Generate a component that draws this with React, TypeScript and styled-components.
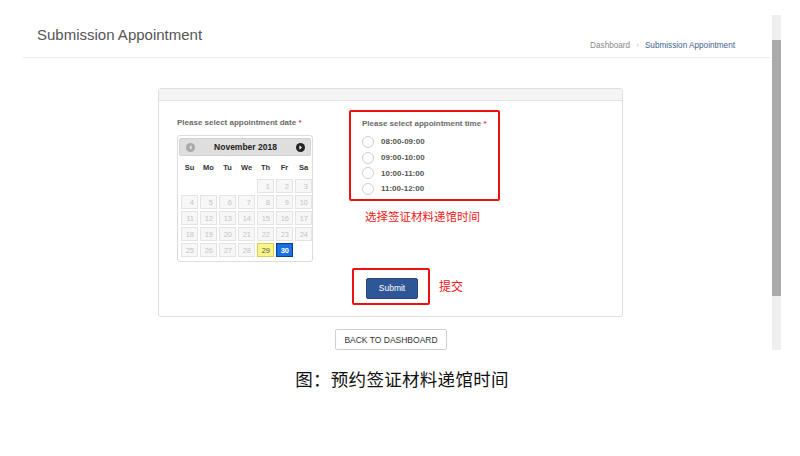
import React from "react";
import styled, { createGlobalStyle } from "styled-components";

const Global = createGlobalStyle`
  html, body { margin: 0; padding: 0; background: #fff; }
  body { width: 800px; height: 456px; overflow: hidden; font-family: "Liberation Sans", Arial, sans-serif; }
`;

const Page = styled.div`
  width: 800px;
  height: 456px;
  display: flex;
  flex-direction: column;
`;

const Shot = styled.div`
  display: flex;
  height: 350px;
`;

const Main = styled.div`
  width: 772px;
  display: flex;
  flex-direction: column;
`;

const ScrollTrack = styled.div`
  margin-top: 15px;
  width: 9px;
  height: 335px;
  background: #efefef;
  display: flex;
  flex-direction: column;
`;

const ScrollThumb = styled.div`
  margin-top: 25px;
  height: 256px;
  background: #ababab;
`;

const Header = styled.div`
  margin-left: 23px;
  width: 747px;
  height: 58px;
  box-sizing: border-box;
  border-bottom: 1px solid #ececec;
  display: flex;
  justify-content: space-between;
  padding: 26px 35px 0 14px;
`;

const Title = styled.h1`
  margin: 0;
  font-size: 15px;
  line-height: 18px;
  font-weight: normal;
  color: #555;
`;

const Crumbs = styled.div`
  margin-top: 14px;
  font-size: 8.2px;
  line-height: 11px;
  color: #888;
  display: flex;
  gap: 6px;
`;

const CrumbSep = styled.span`
  color: #c4c4c4;
`;

const CrumbActive = styled.span`
  color: #40638e;
`;

const Panel = styled.div`
  margin: 30px 0 0 158px;
  width: 465px;
  box-sizing: border-box;
  border: 1px solid #dedede;
  border-radius: 3px;
`;

const PanelHead = styled.div`
  height: 11px;
  background: #f4f4f4;
  border-bottom: 1px solid #e2e2e2;
`;

const PanelBody = styled.div`
  padding: 9px 18px 11px 18px;
  display: flex;
  flex-direction: column;
`;

const Columns = styled.div`
  display: flex;
  gap: 36px;
  align-items: flex-start;
`;

const DateCol = styled.div`
  width: 136px;
  padding-top: 8px;
`;

const Label = styled.div`
  font-size: 8px;
  line-height: 10px;
  font-weight: bold;
  color: #6a6a6a;
  white-space: nowrap;
`;

const Star = styled.span`
  color: #e04040;
`;

const Calendar = styled.div`
  margin-top: 7px;
  border: 1px solid #dcdcdc;
  border-radius: 3px;
  padding: 2px 1px 3px 1px;
  box-sizing: border-box;
  width: 136px;
`;

const CalHead = styled.div`
  height: 18px;
  background: #dedede;
  border: 1px solid #d2d2d2;
  border-radius: 2px;
  box-sizing: border-box;
  display: flex;
  align-items: center;
  justify-content: space-between;
  padding: 0 5px 0 6px;
`;

const Month = styled.span`
  font-size: 8.5px;
  font-weight: bold;
  color: #222;
`;

const DayGrid = styled.div`
  display: grid;
  grid-template-columns: repeat(7, 19px);
  grid-template-rows: 22px;
  grid-auto-rows: 16px;
  padding-left: 1px;
`;

const DayName = styled.div`
  display: flex;
  align-items: center;
  justify-content: center;
  font-size: 7.5px;
  font-weight: bold;
  color: #333;
`;

const Cell = styled.div<{ $kind?: "normal" | "today" | "active" | "empty" }>`
  margin: 1px;
  box-sizing: border-box;
  display: flex;
  align-items: center;
  justify-content: flex-end;
  padding-right: 3px;
  font-size: 7.5px;
  ${({ $kind }) =>
    $kind === "empty"
      ? "border: none; background: transparent;"
      : $kind === "today"
      ? "border: 1px solid #d8ce56; background: #fbf487; color: #555;"
      : $kind === "active"
      ? "border: 1px solid #0c3e8e; background: #1b6fe0; color: #fff; font-weight: bold;"
      : "border: 1px solid #e4e4e4; background: #f7f7f7; color: #c4c4c4;"}
`;

const TimeCol = styled.div`
  display: flex;
  flex-direction: column;
`;

const RedBox = styled.div`
  width: 151px;
  height: 91px;
  box-sizing: border-box;
  border: 2px solid #f01010;
  border-radius: 2px;
  padding: 7px 11px 0 11px;
`;

const Options = styled.div`
  margin-top: 5px;
  display: flex;
  flex-direction: column;
`;

const Option = styled.label`
  height: 15.7px;
  display: flex;
  align-items: center;
  gap: 7px;
  font-size: 8px;
  font-weight: bold;
  color: #555;
`;

const Radio = styled.span`
  width: 10px;
  height: 10px;
  border-radius: 50%;
  border: 1px solid #cfcfcf;
  background: #fff;
`;

const Note = styled.div`
  margin-top: 8px;
  padding-left: 16px;
  font-family: "Noto Sans CJK SC", sans-serif;
  font-size: 11.5px;
  line-height: 14px;
  color: #f01818;
`;

const SubmitRow = styled.div`
  margin-top: 6px;
  display: flex;
  justify-content: center;
`;

const SubmitWrap = styled.div`
  position: relative;
  margin-left: 1px;
`;

const SubmitBox = styled.div`
  width: 78px;
  height: 37px;
  box-sizing: border-box;
  border: 2px solid #f01010;
  border-radius: 2px;
  padding: 7px 0 0 12px;
`;

const SubmitButton = styled.button`
  width: 52px;
  height: 21px;
  border: 1px solid #28497a;
  border-radius: 2px;
  background: #2f5797;
  color: #fff;
  font-family: "Liberation Sans", Arial, sans-serif;
  font-size: 8.5px;
  padding: 0;
`;

const SubmitNote = styled.span`
  position: absolute;
  left: 87px;
  top: 11px;
  font-family: "Noto Sans CJK SC", sans-serif;
  font-size: 12px;
  line-height: 14px;
  color: #f01818;
  white-space: nowrap;
`;

const BackRow = styled.div`
  margin-top: 12px;
  display: flex;
  padding-left: 335px;
`;

const BackButton = styled.button`
  width: 112px;
  height: 21px;
  background: #fff;
  border: 1px solid #cfcfcf;
  border-radius: 2px;
  font-family: "Liberation Sans", Arial, sans-serif;
  font-size: 8.5px;
  color: #333;
  padding: 0;
`;

const Caption = styled.div`
  margin-top: 18px;
  text-align: center;
  padding-left: 4px;
  font-family: "Noto Sans CJK SC", sans-serif;
  font-size: 17.5px;
  line-height: 22px;
  color: #111;
  letter-spacing: 0.3px;
`;

const NavIcon = ({ dir, dark }: { dir: "l" | "r"; dark?: boolean }) => (
  <svg width="9" height="9" viewBox="0 0 10 10">
    <circle cx="5" cy="5" r="5" fill={dark ? "#222" : "#a9a9a9"} />
    {dir === "l" ? (
      <path d="M6.2 2.6 L3.4 5 L6.2 7.4 Z" fill="#e8e8e8" />
    ) : (
      <path d="M3.8 2.6 L6.6 5 L3.8 7.4 Z" fill="#fff" />
    )}
  </svg>
);

const dayNames = ["Su", "Mo", "Tu", "We", "Th", "Fr", "Sa"];
const days: (number | null)[] = [
  null, null, null, null, 1, 2, 3,
  4, 5, 6, 7, 8, 9, 10,
  11, 12, 13, 14, 15, 16, 17,
  18, 19, 20, 21, 22, 23, 24,
  25, 26, 27, 28, 29, 30, null,
];
const times = ["08:00-09:00", "09:00-10:00", "10:00-11:00", "11:00-12:00"];

export default function App() {
  return (
    <Page>
      <Global />
      <Shot>
        <Main>
          <Header>
            <Title>Submission Appointment</Title>
            <Crumbs>
              <span>Dashboard</span>
              <CrumbSep>›</CrumbSep>
              <CrumbActive>Submission Appointment</CrumbActive>
            </Crumbs>
          </Header>
          <Panel>
            <PanelHead />
            <PanelBody>
              <Columns>
                <DateCol>
                  <Label>
                    Please select appointment date <Star>*</Star>
                  </Label>
                  <Calendar>
                    <CalHead>
                      <NavIcon dir="l" />
                      <Month>November 2018</Month>
                      <NavIcon dir="r" dark />
                    </CalHead>
                    <DayGrid>
                      {dayNames.map((d) => (
                        <DayName key={d}>{d}</DayName>
                      ))}
                      {days.map((d, i) => (
                        <Cell
                          key={i}
                          $kind={d === null ? "empty" : d === 29 ? "today" : d === 30 ? "active" : "normal"}
                        >
                          {d}
                        </Cell>
                      ))}
                    </DayGrid>
                  </Calendar>
                </DateCol>
                <TimeCol>
                  <RedBox>
                    <Label>
                      Please select appointment time <Star>*</Star>
                    </Label>
                    <Options>
                      {times.map((t) => (
                        <Option key={t}>
                          <Radio />
                          {t}
                        </Option>
                      ))}
                    </Options>
                  </RedBox>
                  <Note>选择签证材料递馆时间</Note>
                </TimeCol>
              </Columns>
              <SubmitRow>
                <SubmitWrap>
                  <SubmitBox>
                    <SubmitButton>Submit</SubmitButton>
                  </SubmitBox>
                  <SubmitNote>提交</SubmitNote>
                </SubmitWrap>
              </SubmitRow>
            </PanelBody>
          </Panel>
          <BackRow>
            <BackButton>BACK TO DASHBOARD</BackButton>
          </BackRow>
        </Main>
        <ScrollTrack>
          <ScrollThumb />
        </ScrollTrack>
      </Shot>
      <Caption>图：预约签证材料递馆时间</Caption>
    </Page>
  );
}
